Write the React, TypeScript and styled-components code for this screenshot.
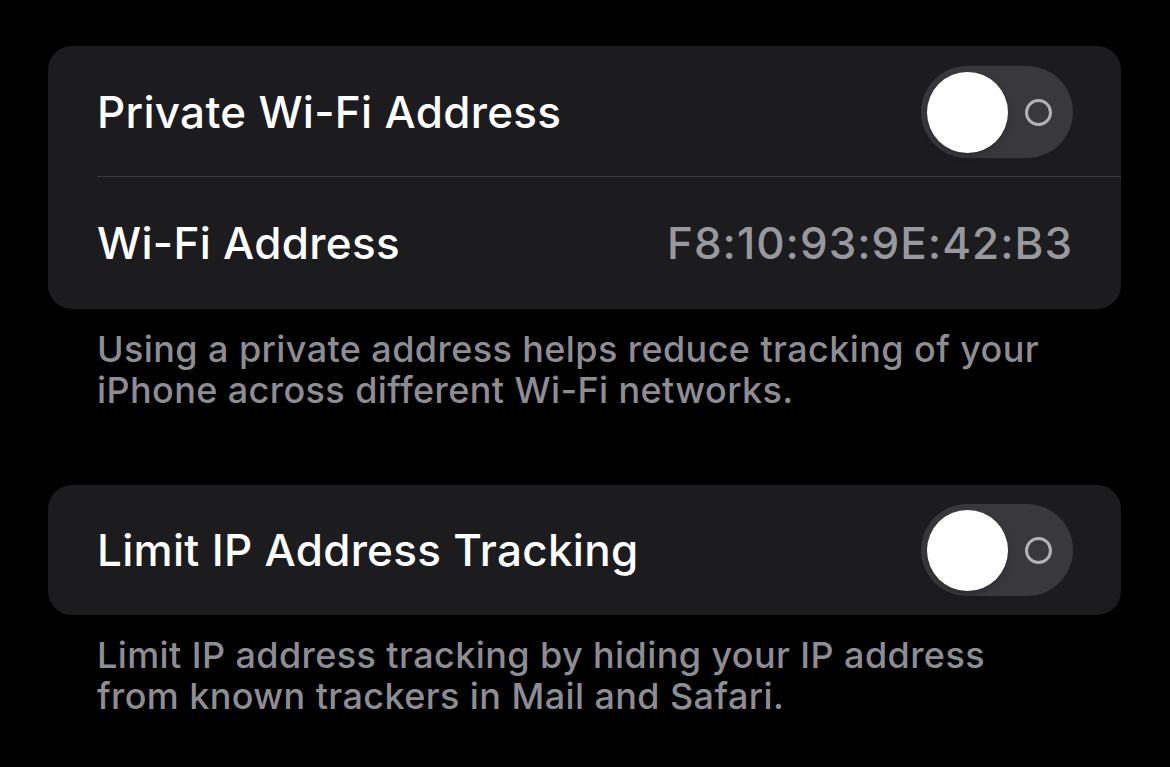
import styled, { createGlobalStyle } from "styled-components";

const GlobalStyle = createGlobalStyle`
  html, body {
    margin: 0;
    padding: 0;
    background: #000;
  }
  body {
    font-family: Inter, "Noto Sans", sans-serif;
    -webkit-font-smoothing: antialiased;
  }
`;

function Toggle() {
  return (
    <Track>
      <Knob />
      <OffRing />
    </Track>
  );
}

function App() {
  return (
    <Page>
      <GlobalStyle />
      <Card>
        <Row $divider>
          <Label>Private Wi-Fi Address</Label>
          <Toggle />
        </Row>
        <Row $height={132}>
          <Label>Wi-Fi Address</Label>
          <Value>F8:10:93:9E:42:B3</Value>
        </Row>
      </Card>
      <Footer>
        Using a private address helps reduce tracking of your
        <br />
        iPhone across different Wi-Fi networks.
      </Footer>

      <Card $gapTop>
        <Row $height={130}>
          <Label>Limit IP Address Tracking</Label>
          <Toggle />
        </Row>
      </Card>
      <Footer>
        Limit IP address tracking by hiding your IP address
        <br />
        from known trackers in Mail and Safari.
      </Footer>
    </Page>
  );
}

export default App;

const Page = styled.div`
  width: 1170px;
  height: 767px;
  box-sizing: border-box;
  padding: 46px 49px 0 48px;
  background: #000;
  overflow: hidden;
`;

const Card = styled.div<{ $gapTop?: boolean }>`
  background: #1c1c1e;
  border-radius: 24px;
  margin-top: ${(p) => (p.$gapTop ? "74px" : "0")};
  overflow: hidden;
`;

const Row = styled.div<{ $divider?: boolean; $height?: number }>`
  position: relative;
  display: flex;
  align-items: center;
  justify-content: space-between;
  height: ${(p) => p.$height ?? 131}px;
  padding: 0 48px 0 49px;

  ${(p) =>
    p.$divider &&
    `
    &::after {
      content: "";
      position: absolute;
      left: 49px;
      right: 0;
      bottom: 0;
      height: 1px;
      background: #3a3a3c;
    }
  `}
`;

const Label = styled.div`
  color: #fff;
  font-size: 44px;
  font-weight: 500;
  letter-spacing: 0.3px;
`;

const Value = styled.div`
  color: #98989f;
  font-size: 44px;
  font-weight: 500;
  letter-spacing: 1px;
`;

const Track = styled.div`
  position: relative;
  width: 152px;
  height: 92px;
  border-radius: 46px;
  background: #39393d;
  flex-shrink: 0;
`;

const Knob = styled.div`
  position: absolute;
  left: 6px;
  top: 6px;
  width: 81px;
  height: 81px;
  border-radius: 50%;
  background: #fff;
  box-shadow: 0 3px 8px rgba(0, 0, 0, 0.15), 0 3px 1px rgba(0, 0, 0, 0.06);
`;

const OffRing = styled.div`
  position: absolute;
  left: 104px;
  top: 33px;
  width: 21px;
  height: 21px;
  border-radius: 50%;
  border: 3px solid #b3b3b7;
`;

const Footer = styled.div`
  margin-top: 20px;
  padding-left: 49px;
  color: #8d8d93;
  font-size: 36px;
  line-height: 41px;
  font-weight: 500;
  letter-spacing: 0.4px;
`;
